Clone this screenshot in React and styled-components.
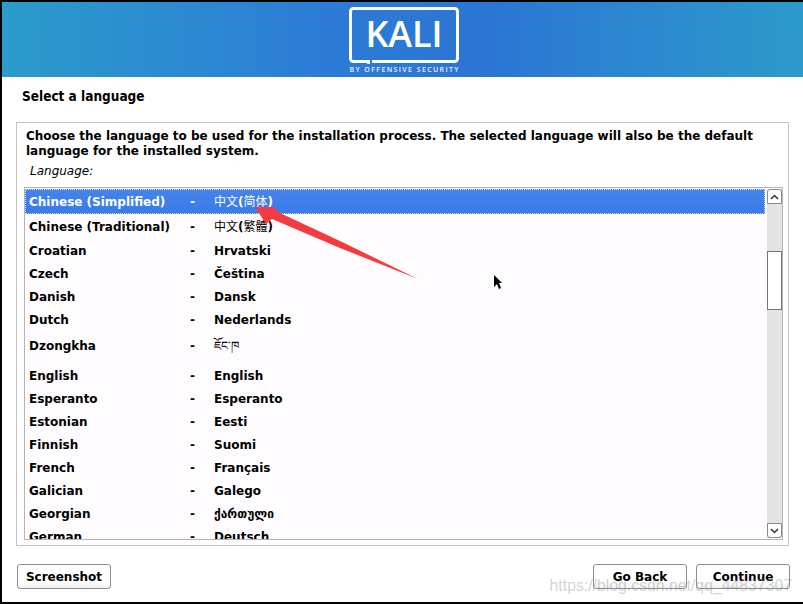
import React from "react";
import styled, { createGlobalStyle } from "styled-components";

const GlobalStyle = createGlobalStyle`
  html, body {
    margin: 0;
    padding: 0;
    background: #000;
  }
`;

const Screen = styled.div`
  position: relative;
  width: 801px;
  height: 604px;
  margin-left: 2px;
  padding: 2px 0;
  box-sizing: border-box;
  overflow: hidden;
  display: flex;
  flex-direction: column;
  font-family: "DejaVu Sans", "Noto Sans CJK SC", sans-serif;
  color: #000;
`;

const Banner = styled.div`
  flex: none;
  height: 75px;
  display: flex;
  justify-content: center;
  background:
    repeating-linear-gradient(120deg, rgba(255, 255, 255, 0.025) 0 1px, transparent 1px 4px),
    linear-gradient(90deg, #2a9bca 0%, #2b7bd6 40%, #2a74d4 60%, #2b9aca 100%);
`;

const Logo = styled.svg`
  width: 114px;
  height: 75px;
  margin-left: 3px;
`;

const Body = styled.div`
  flex: 1;
  min-height: 0;
  background: #fff;
  display: flex;
  flex-direction: column;
`;

const PageTitle = styled.div`
  height: 45px;
  padding: 12px 0 0 20px;
  box-sizing: border-box;
  font-family: "DejaVu Sans Condensed", "DejaVu Sans", sans-serif;
  font-weight: bold;
  font-size: 13.5px;
  line-height: 15px;
`;

const Panel = styled.div`
  margin-left: 14px;
  width: 773px;
  height: 424px;
  box-sizing: border-box;
  border: 1px solid #c4c4c4;
  padding: 6px 5px 4px 7px;
  display: flex;
  flex-direction: column;
`;

const Intro = styled.div`
  font-weight: bold;
  font-size: 12px;
  line-height: 15px;
  padding-left: 2px;
`;

const FieldLabel = styled.div`
  font-style: italic;
  font-size: 12px;
  line-height: 15px;
  padding: 5px 0 0 6px;
  height: 28px;
  box-sizing: border-box;
`;

const ListFrame = styled.div`
  width: 759px;
  height: 353px;
  box-sizing: border-box;
  border: 1px solid #b4b4b4;
  background: #fffcff;
  display: flex;
  overflow: hidden;
`;

const Rows = styled.div`
  width: 741px;
  padding-top: 1px;
  overflow: hidden;
`;

const Row = styled.div`
  height: ${(p) => p.$h}px;
  padding-top: 2px;
  padding-bottom: ${(p) => p.$pb || 0}px;
  box-sizing: border-box;
  display: grid;
  grid-template-columns: 161px 24px 1fr;
  padding-left: 4px;
  align-items: center;
  font-weight: bold;
  font-size: 12px;
  line-height: 15px;
  color: ${(p) => (p.$selected ? "#fff" : "#000")};
  background: ${(p) => (p.$selected ? "linear-gradient(180deg, #4684ea 0%, #3a7aea 100%)" : "transparent")};
  outline: ${(p) => (p.$selected ? "1px dotted #cfe0fa" : "none")};
  outline-offset: -1px;
`;

const Native = styled.span`
  font-weight: ${(p) => (p.$plain ? "normal" : "bold")};
  white-space: nowrap;
`;

const Paren = styled.span`
  font-weight: bold;
`;

const ScrollTrack = styled.div`
  width: 15px;
  margin-left: 2px;
  margin-top: 1px;
  margin-bottom: 1px;
  background: #e3e3e3;
  display: flex;
  flex-direction: column;
  box-shadow: 1px 0 0 #b4b4b4;
`;

const ScrollButton = styled.div`
  height: 15px;
  box-sizing: border-box;
  background: #fff;
  border: 1px solid #8a8a8a;
  border-radius: ${(p) => (p.$down ? "0 0 3px 3px" : "3px 3px 0 0")};
  display: flex;
  align-items: center;
  justify-content: center;
`;

const ScrollThumb = styled.div`
  height: 59px;
  margin-top: 47px;
  box-sizing: border-box;
  background: #fff;
  border: 1px solid #767676;
`;

const ScrollGap = styled.div`
  flex: 1;
`;

const Footer = styled.div`
  flex: 1;
  display: flex;
  align-items: flex-start;
  padding: 18px 0 0 15px;
  gap: 9px;
`;

const Button = styled.div`
  width: 94px;
  height: 25px;
  box-sizing: border-box;
  border: 1px solid #8d8d8d;
  border-radius: 3px;
  background: linear-gradient(180deg, #fff 0%, #fff 70%, #f1f1f1 100%);
  display: flex;
  align-items: center;
  justify-content: center;
  font-weight: bold;
  font-size: 12px;
  margin-left: ${(p) => (p.$push ? "auto" : "0")};
  margin-right: ${(p) => (p.$last ? "13px" : "0")};
`;

const Overlay = styled.svg`
  position: absolute;
  left: -2px;
  top: 0;
  width: 803px;
  height: 604px;
  pointer-events: none;
`;

const Watermark = styled.div`
  position: absolute;
  right: 11px;
  top: 576px;
  font-family: "Liberation Sans", sans-serif;
  font-size: 15.8px;
  line-height: 20px;
  color: rgba(130, 130, 130, 0.36);
  white-space: nowrap;
`;

const languages = [
  { name: "Chinese (Simplified)", cjk: "简体", h: 25, selected: true },
  { name: "Chinese (Traditional)", cjk: "繁體", h: 25 },
  { name: "Croatian", native: "Hrvatski", h: 23 },
  { name: "Czech", native: "Čeština", h: 23 },
  { name: "Danish", native: "Dansk", h: 23 },
  { name: "Dutch", native: "Nederlands", h: 23 },
  { name: "Dzongkha", native: "ཇོང་ཁ", h: 33, pb: 4, plain: true },
  { name: "English", native: "English", h: 23 },
  { name: "Esperanto", native: "Esperanto", h: 23 },
  { name: "Estonian", native: "Eesti", h: 23 },
  { name: "Finnish", native: "Suomi", h: 23 },
  { name: "French", native: "Français", h: 23 },
  { name: "Galician", native: "Galego", h: 23 },
  { name: "Georgian", native: "ქართული", h: 23 },
  { name: "German", native: "Deutsch", h: 23 },
];

export default function App() {
  return (
    <Screen>
      <GlobalStyle />
      <Banner>
        <Logo viewBox="0 0 114 75">
          <path
            d="M25 59.5 H107.5 a3 3 0 0 0 3 -3 V9.5 a3 3 0 0 0 -3 -3 H6.5 a3 3 0 0 0 -3 3 V56.5 a3 3 0 0 0 3 3 H21.5 V62"
            fill="none"
            stroke="#fff"
            strokeWidth="3"
          />
          <text x="57" y="45" textAnchor="middle" fill="#fff" fontFamily="'Open Sans', sans-serif" fontWeight="600" fontSize="36" textLength="77">
            KALI
          </text>
          <text x="57" y="70" textAnchor="middle" fill="#eef3fc" fontFamily="'Open Sans', sans-serif" fontWeight="600" fontSize="7" textLength="109">
            BY OFFENSIVE SECURITY
          </text>
        </Logo>
      </Banner>
      <Body>
        <PageTitle>Select a language</PageTitle>
        <Panel>
          <Intro>
            Choose the language to be used for the installation process. The selected language will also be the default
            <br />
            language for the installed system.
          </Intro>
          <FieldLabel>Language:</FieldLabel>
          <ListFrame>
            <Rows>
              {languages.map((l) => (
                <Row key={l.name} $h={l.h} $pb={l.pb} $selected={l.selected}>
                  <span>{l.name}</span>
                  <span>-</span>
                  {l.cjk ? (
                    <Native $plain>
                      中文<Paren>(</Paren>
                      {l.cjk}
                      <Paren>)</Paren>
                    </Native>
                  ) : (
                    <Native $plain={l.plain}>{l.native}</Native>
                  )}
                </Row>
              ))}
            </Rows>
            <ScrollTrack>
              <ScrollButton>
                <svg width="9" height="6" viewBox="0 0 9 6">
                  <path d="M1 5 L4.5 1.5 L8 5" fill="none" stroke="#333" strokeWidth="1.5" />
                </svg>
              </ScrollButton>
              <ScrollThumb />
              <ScrollGap />
              <ScrollButton $down>
                <svg width="9" height="6" viewBox="0 0 9 6">
                  <path d="M1 1 L4.5 4.5 L8 1" fill="none" stroke="#333" strokeWidth="1.5" />
                </svg>
              </ScrollButton>
            </ScrollTrack>
          </ListFrame>
        </Panel>
        <Footer>
          <Button>Screenshot</Button>
          <Button $push>Go Back</Button>
          <Button $last>Continue</Button>
        </Footer>
      </Body>
      <Overlay viewBox="0 0 803 604">
        <path d="M418 279 L340 241 L280 213 L273 207 L255 207 L266 224 L272 219 L340 248 Z" fill="#f23c40" />
        <path d="M494 275 V287 L497 284 L499 289 L501 288 L499 283 L502 283 Z" fill="#000" />
      </Overlay>
      <Watermark>https://blog.csdn.net/qq_44837307</Watermark>
    </Screen>
  );
}
